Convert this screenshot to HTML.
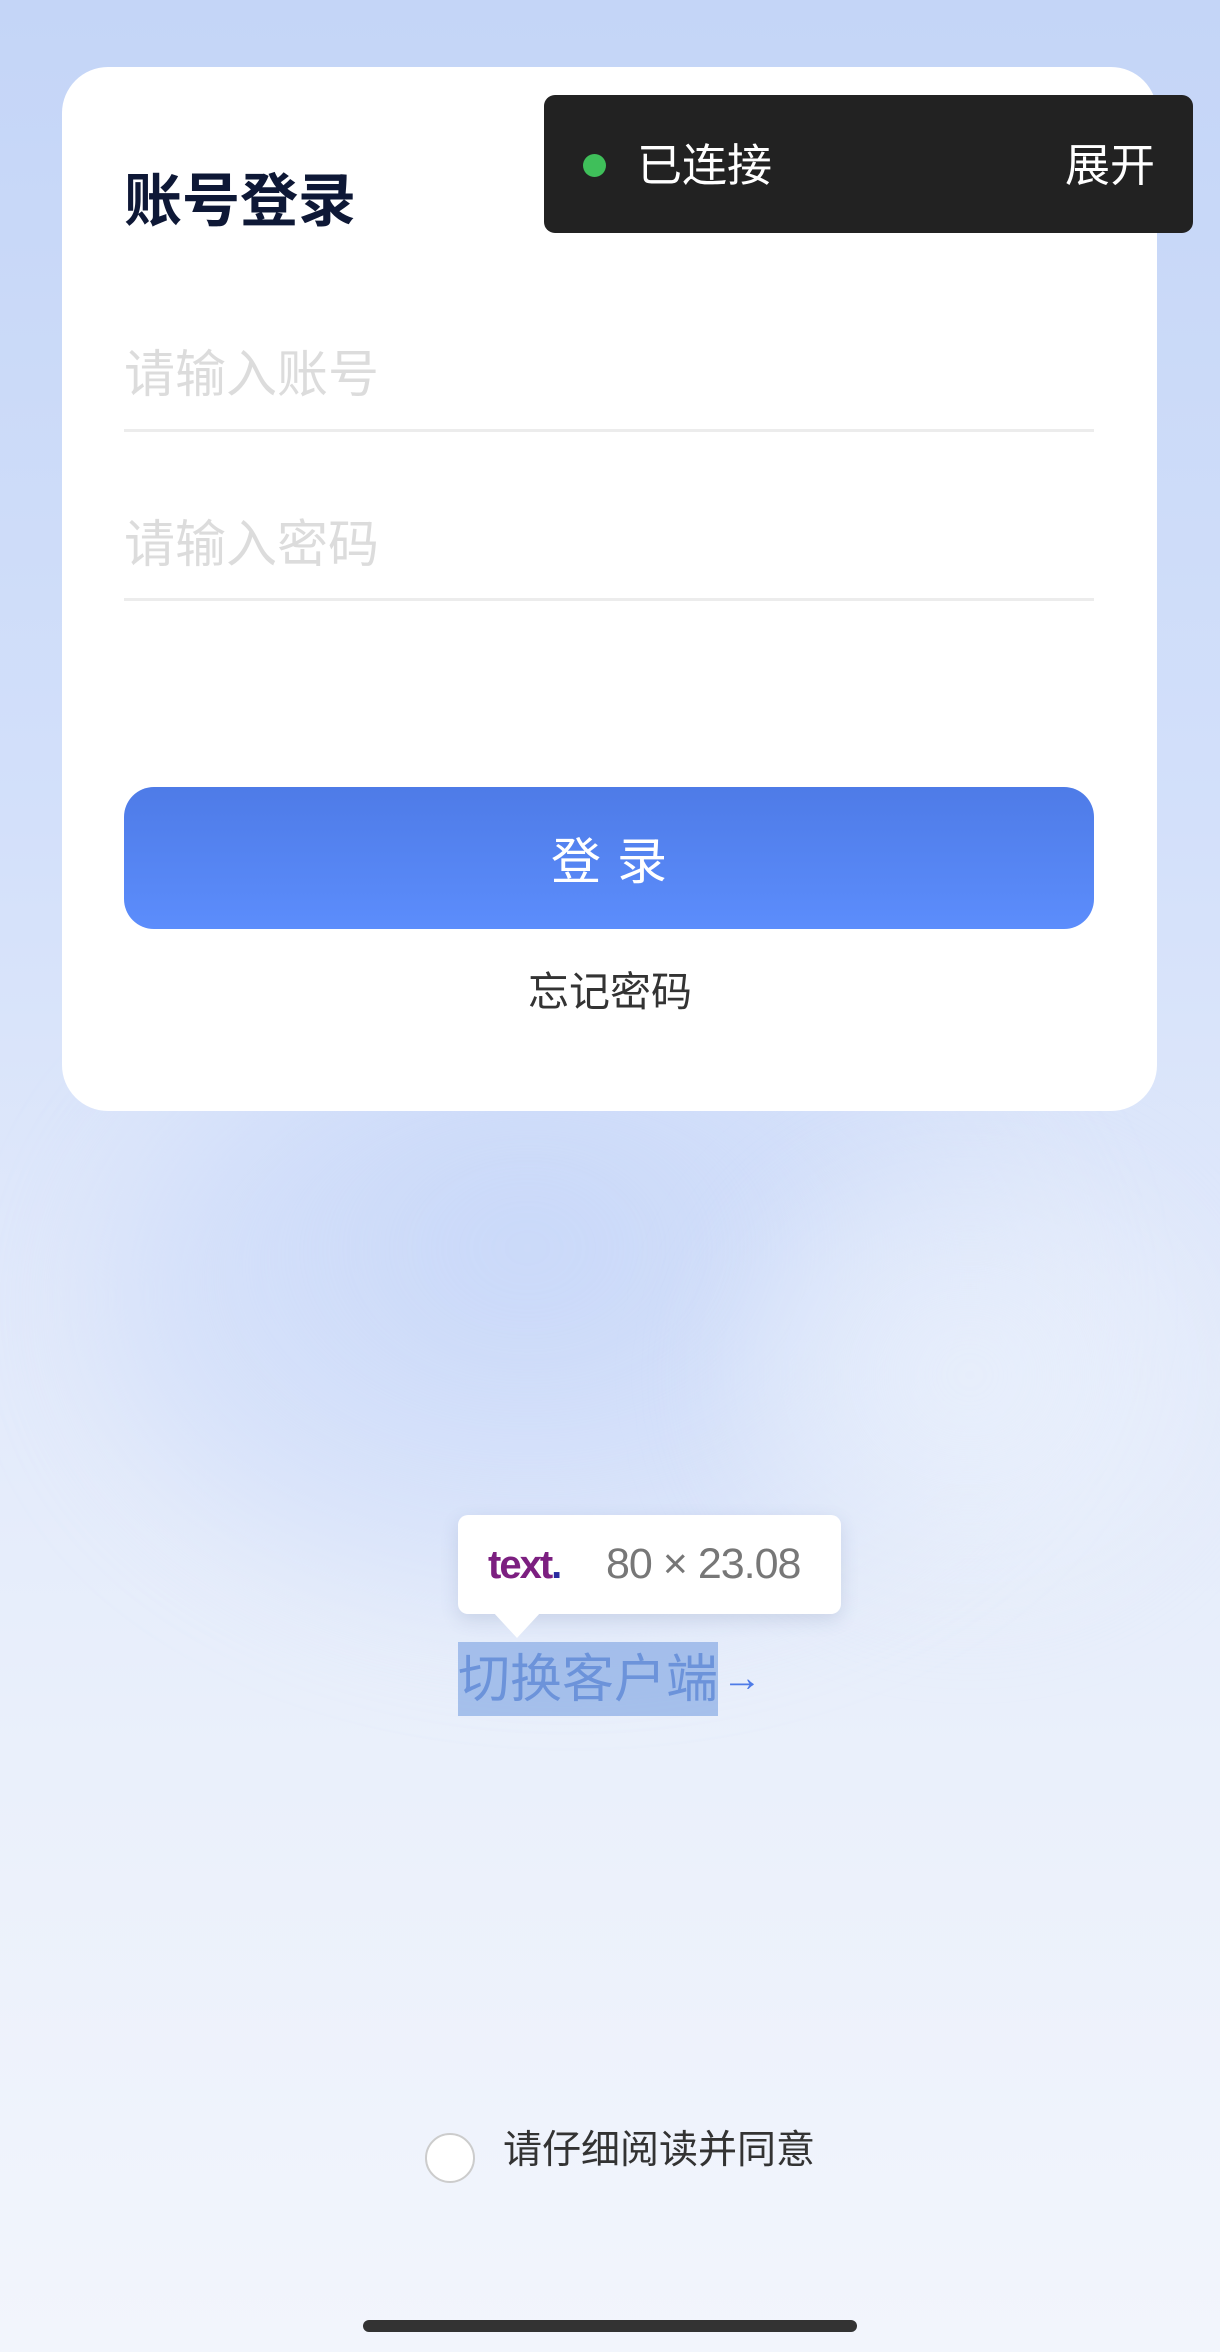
<!DOCTYPE html>
<html><head><meta charset="utf-8">
<style>
html,body{margin:0;padding:0;}
body{width:1220px;height:2352px;position:relative;overflow:hidden;
font-family:"Liberation Sans","Noto Sans CJK SC",sans-serif;
background:linear-gradient(180deg,#c4d5f7 0%,#d3e0fa 35%,#e1e9fb 55%,#eaf0fb 75%,#f2f5fc 100%);}
.blob{position:absolute;left:100px;top:1000px;width:950px;height:620px;border-radius:50%;filter:blur(60px);
background:radial-gradient(ellipse at 45% 40%,rgba(198,214,248,.95) 0%,rgba(205,219,249,.6) 45%,rgba(215,226,250,0) 100%);}
.blob2{position:absolute;left:720px;top:1150px;width:500px;height:450px;border-radius:50%;filter:blur(50px);
background:radial-gradient(ellipse at center,rgba(236,242,252,.8),rgba(236,242,252,0) 100%);}
.card{position:absolute;left:62px;top:67px;width:1095px;height:1044px;background:#fff;border-radius:46px;}
.t{position:absolute;white-space:nowrap;line-height:1;}
.line{position:absolute;left:124px;width:970px;height:3px;background:#ececec;}
.btn{position:absolute;left:124px;top:787px;width:970px;height:142px;border-radius:30px;
background:linear-gradient(180deg,#4e7be7,#5c8dfc);color:#fff;font-size:50px;text-align:center;line-height:150px;letter-spacing:16px;text-indent:16px;}
.toast{position:absolute;left:544px;top:95px;width:649px;height:138px;border-radius:11px;background:#222;}
.tip{position:absolute;left:458px;top:1515px;width:383px;height:99px;background:#fff;border-radius:10px;box-shadow:0 6px 18px rgba(60,80,130,.15);}
.arrow{position:absolute;left:493px;top:1612px;width:0;height:0;border-left:24px solid transparent;border-right:24px solid transparent;border-top:26px solid #fff;}
.hl{position:absolute;left:458px;top:1642px;width:260px;height:74px;background:rgba(120,160,225,.6);}
</style></head><body>
<div class="blob"></div>
<div class="blob2"></div>
<div class="card"></div>
<div class="t" style="left:124px;top:173px;font-size:58px;font-weight:bold;color:#0e1836;">账号登录</div>
<div class="t" style="left:124px;top:349px;font-size:51px;color:#dcdcdc;">请输入账号</div>
<div class="line" style="top:429px"></div>
<div class="t" style="left:124px;top:519px;font-size:51px;color:#dcdcdc;">请输入密码</div>
<div class="line" style="top:598px"></div>
<div class="btn">登录</div>
<div class="t" style="left:0;width:1220px;text-align:center;top:972px;font-size:41px;color:#333;">忘记密码</div>
<div class="toast">
  <div style="position:absolute;left:39px;top:59px;width:23px;height:23px;border-radius:50%;background:#3fbf5a;"></div>
  <div class="t" style="left:93px;top:48px;font-size:45px;color:#fff;">已连接</div>
  <div class="t" style="right:38px;top:48px;font-size:45px;color:#fff;">展开</div>
</div>
<div class="tip">
  <span class="t" style="left:30px;top:30px;font-size:40px;font-weight:bold;color:#7c1f80;letter-spacing:-2px;">text<span style="color:#2a2aa0">.</span></span>
  <span class="t" style="left:148px;top:28px;font-size:43px;color:#777;letter-spacing:-1px;">80 × 23.08</span>
</div>
<div class="arrow"></div>
<div class="hl"></div>
<div class="t" style="left:458px;top:1654px;font-size:52px;color:#6c93da;">切换客户端</div>
<div class="t" style="left:722px;top:1658px;font-size:40px;color:#4e7be7;">→</div>
<div style="position:absolute;left:425px;top:2133px;width:46px;height:46px;border-radius:50%;border:2px solid #ccc;background:#fff;"></div>
<div class="t" style="left:503px;top:2131px;font-size:39px;color:#333;">请仔细阅读并同意</div>
<div style="position:absolute;left:363px;top:2320px;width:494px;height:12px;border-radius:6px;background:#333;"></div>
</body></html>
